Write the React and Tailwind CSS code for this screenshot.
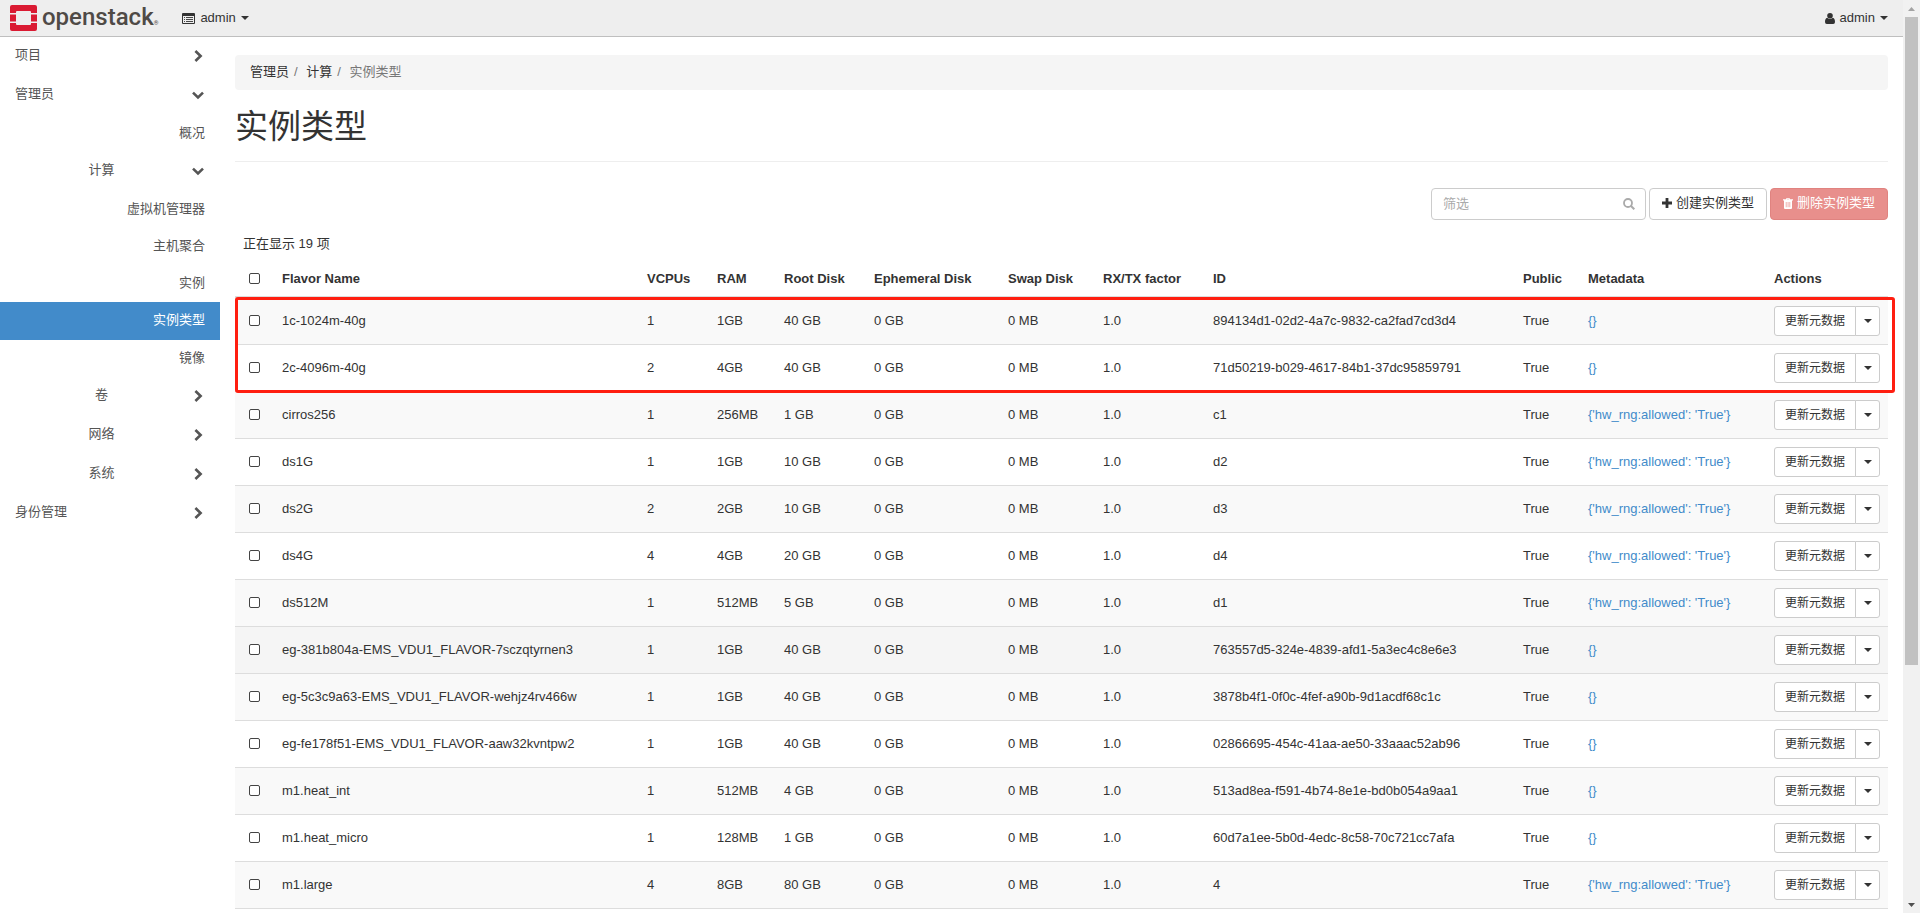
import React from "react";

const uiFont = "font-['Liberation_Sans','Noto_Sans_CJK_SC',sans-serif]";

const rows = [
  ["1c-1024m-40g", "1", "1GB", "40 GB", "894134d1-02d2-4a7c-9832-ca2fad7cd3d4", "{}"],
  ["2c-4096m-40g", "2", "4GB", "40 GB", "71d50219-b029-4617-84b1-37dc95859791", "{}"],
  ["cirros256", "1", "256MB", "1 GB", "c1", "{'hw_rng:allowed': 'True'}"],
  ["ds1G", "1", "1GB", "10 GB", "d2", "{'hw_rng:allowed': 'True'}"],
  ["ds2G", "2", "2GB", "10 GB", "d3", "{'hw_rng:allowed': 'True'}"],
  ["ds4G", "4", "4GB", "20 GB", "d4", "{'hw_rng:allowed': 'True'}"],
  ["ds512M", "1", "512MB", "5 GB", "d1", "{'hw_rng:allowed': 'True'}"],
  ["eg-381b804a-EMS_VDU1_FLAVOR-7sczqtyrnen3", "1", "1GB", "40 GB", "763557d5-324e-4839-afd1-5a3ec4c8e6e3", "{}"],
  ["eg-5c3c9a63-EMS_VDU1_FLAVOR-wehjz4rv466w", "1", "1GB", "40 GB", "3878b4f1-0f0c-4fef-a90b-9d1acdf68c1c", "{}"],
  ["eg-fe178f51-EMS_VDU1_FLAVOR-aaw32kvntpw2", "1", "1GB", "40 GB", "02866695-454c-41aa-ae50-33aaac52ab96", "{}"],
  ["m1.heat_int", "1", "512MB", "4 GB", "513ad8ea-f591-4b74-8e1e-bd0b054a9aa1", "{}"],
  ["m1.heat_micro", "1", "128MB", "1 GB", "60d7a1ee-5b0d-4edc-8c58-70c721cc7afa", "{}"],
  ["m1.large", "4", "8GB", "80 GB", "4", "{'hw_rng:allowed': 'True'}"],
];

const highlightedRow = 7;

const headings = [
  "Flavor Name",
  "VCPUs",
  "RAM",
  "Root Disk",
  "Ephemeral Disk",
  "Swap Disk",
  "RX/TX factor",
  "ID",
  "Public",
  "Metadata",
  "Actions",
];

function Caret() {
  return (
    <svg className="h-1 w-2 shrink-0" viewBox="0 0 8 4" fill="currentColor" aria-hidden="true">
      <path d="M0 0H8L4 4Z" />
    </svg>
  );
}

function Chevron({ open }) {
  return (
    <svg className="h-3 w-3 shrink-0" viewBox="0 0 12 12" fill="none" stroke="currentColor" strokeWidth="2.6" aria-hidden="true">
      {open ? <path d="M1 3.600L6 8.400L11 3.600" /> : <path d="M3.400 1L8.600 6L3.400 11" />}
    </svg>
  );
}

function Logo() {
  return (
    <a href="#home" className="flex items-center gap-[5px] text-[#4f4a46]">
      <svg className="h-[26px] w-[27px]" viewBox="0 0 27 26" aria-hidden="true">
        <g fill="#da1a32">
          <path d="M2 0H25Q27 0 27 2V8H21V7Q21 6 20 6H7Q6 6 6 7V8H0V2Q0 0 2 0Z" />
          <path d="M0 9.600H6V16.400H0ZM21 9.600H27V16.400H21Z" />
          <path d="M0 18H6V19Q6 20 7 20H20Q21 20 21 19V18H27V24Q27 26 25 26H2Q0 26 0 24Z" />
        </g>
      </svg>
      <span className="flex items-end pb-[2px] font-['Roboto','Open_Sans',sans-serif] text-2xl leading-6 font-medium">
        openstack<span className="text-[6px] leading-3 font-normal">®</span>
      </span>
    </a>
  );
}

function Panel({ label, open, nested }) {
  return (
    <button
      type="button"
      aria-expanded={!!open}
      className={
        nested
          ? "flex h-[39px] w-full items-center pr-4 pb-px pl-[11px] text-center"
          : "flex h-[39px] w-full items-center pr-4 pb-px pl-[15px] text-left"
      }
    >
      <span className="flex-1 pb-[2px]">{label}</span>
      <Chevron open={open} />
    </button>
  );
}

function Leaf({ label, active }) {
  return (
    <a
      href="#panel"
      aria-current={active ? "page" : undefined}
      className={
        active
          ? "flex h-[38px] items-center justify-end bg-[#428bca] pr-[15px] pb-[2px] text-white"
          : "flex h-[37px] items-center justify-end pr-[15px] pb-px"
      }
    >
      {label}
    </a>
  );
}

function Check({ label }) {
  return (
    <input
      type="checkbox"
      aria-label={label}
      className="block h-[11px] w-[11px] appearance-none rounded-[2px] border border-[#444] bg-white"
    />
  );
}

export default function App() {
  return (
    <div className={`${uiFont} flex h-screen overflow-hidden bg-white text-[13px] leading-5 text-[#333]`}>
      <div className="flex min-w-0 flex-1 flex-col">
        <header className="flex h-[37px] shrink-0 items-center border-b border-[#bfbfbf] bg-[#eee] pr-[15px] pl-[10px]">
          <Logo />
          <button type="button" className="ml-6 flex items-center gap-[5px]">
            <svg className="h-[11px] w-[13px]" viewBox="0 0 13 11" aria-hidden="true">
              <path fill="currentColor" fillRule="evenodd" d="M1 0H12Q13 0 13 1V10Q13 11 12 11H1Q0 11 0 10V1Q0 0 1 0ZM1 3V10H12V3Z" />
              <path stroke="currentColor" strokeWidth=".9" d="M2 4.500H3M4 4.500H11M2 6.500H3M4 6.500H11M2 8.500H3M4 8.500H11" />
            </svg>
            <span>admin</span>
            <Caret />
          </button>
          <button type="button" className="ml-auto flex items-center gap-[5px]">
            <svg className="h-[11px] w-[10px]" viewBox="0 0 10 11" fill="currentColor" aria-hidden="true">
              <circle cx="5" cy="2.800" r="2.800" />
              <path d="M2.200 4.800C.6 5.200 0 7 0 9Q0 11 1.800 11H8.200Q10 11 10 9C10 7 9.400 5.200 7.800 4.800Q5 7.400 2.200 4.800Z" />
            </svg>
            <span>admin</span>
            <Caret />
          </button>
        </header>

        <div className="flex min-h-0 flex-1">
          <nav className="w-[220px] shrink-0 text-[#555]">
            <Panel label="项目" />
            <Panel label="管理员" open />
            <Leaf label="概况" />
            <Panel label="计算" open nested />
            <Leaf label="虚拟机管理器" />
            <Leaf label="主机聚合" />
            <Leaf label="实例" />
            <Leaf label="实例类型" active />
            <Leaf label="镜像" />
            <Panel label="卷" nested />
            <Panel label="网络" nested />
            <Panel label="系统" nested />
            <Panel label="身份管理" />
          </nav>

          <main className="min-w-0 flex-1 pt-[18px] pr-[15px] pl-[15px]">
            <ol className="flex h-[35px] items-center rounded bg-[#f5f5f5] px-[15px] pb-px">
              <li><a href="#admin">管理员</a></li>
              <li><span className="px-[5px] text-[#777]">/&nbsp;</span><a href="#compute">计算</a></li>
              <li className="text-[#777]"><span className="px-[5px]">/&nbsp;</span>实例类型</li>
            </ol>

            <h1 className="mt-[17px] border-b border-[#eee] pb-[14px] text-[33px] leading-10">实例类型</h1>

            <div className="mt-[26px] flex justify-end gap-[3px]">
              <div className="relative w-[215px]">
                <input
                  type="text"
                  aria-label="筛选"
                  placeholder="筛选"
                  className="h-8 w-full rounded border border-[#ccc] px-[11px] pb-[2px] placeholder:text-[#aaa]"
                />
                <svg className="absolute top-[10px] right-[11px] h-3 w-3 text-[#aaa]" viewBox="0 0 12 12" fill="none" stroke="currentColor" aria-hidden="true">
                  <circle cx="5" cy="5" r="4" strokeWidth="1.800" />
                  <path d="M8 8L11.300 11.300" strokeWidth="2" />
                </svg>
              </div>
              <button type="button" className="flex h-8 items-center gap-1 rounded border border-[#ccc] bg-white px-3 pb-[2px]">
                <svg className="h-[10px] w-[10px]" viewBox="0 0 10 10" fill="currentColor" aria-hidden="true">
                  <path d="M3.600 0H6.400V3.600H10V6.400H6.400V10H3.600V6.400H0V3.600H3.600Z" />
                </svg>
                创建实例类型
              </button>
              <button type="button" className="flex h-8 items-center gap-1 rounded border border-[#e08380] bg-[#e88f8c] px-3 pb-[2px] text-white">
                <svg className="h-[11px] w-[10px]" viewBox="0 0 10 11" fill="currentColor" aria-hidden="true">
                  <path fillRule="evenodd" d="M3 1.300L3.600 0H6.400L7 1.300H10V2.500H9V10Q9 11 8 11H2Q1 11 1 10V2.500H0V1.300ZM2.800 4V9.300H3.500V4ZM4.700 4V9.300H5.400V4ZM6.500 4V9.300H7.200V4ZM4 1.300H6L5.800.8H4.200Z" />
                </svg>
                删除实例类型
              </button>
            </div>

            <div className="relative mt-[10px]">
              <table className="w-full table-fixed border-separate border-spacing-0 text-left">
                <caption className="h-[29px] px-2 pt-1 text-left">正在显示 19 项</caption>
                <colgroup>
                  <col className="w-[39px]" />
                  <col />
                  <col className="w-[70px]" />
                  <col className="w-[67px]" />
                  <col className="w-[90px]" />
                  <col className="w-[134px]" />
                  <col className="w-[95px]" />
                  <col className="w-[110px]" />
                  <col className="w-[310px]" />
                  <col className="w-[65px]" />
                  <col className="w-[186px]" />
                  <col className="w-[122px]" />
                </colgroup>
                <thead>
                  <tr className="h-[39px]">
                    <th className="border-b-2 border-[#ddd] pt-[2px] pl-[14px]"><Check label="全选" /></th>
                    {headings.map((h) => (
                      <th key={h} className="border-b-2 border-[#ddd] px-2 pt-[2px] font-bold whitespace-nowrap">{h}</th>
                    ))}
                  </tr>
                </thead>
                <tbody className="[&_td]:border-b [&_td]:border-[#ddd] [&_td]:px-2 [&_td]:whitespace-nowrap">
                  {rows.map(([name, cpu, ram, disk, id, meta], i) => (
                    <tr
                      key={name}
                      className={i === highlightedRow ? "h-[47px] bg-[#f5f5f5]" : i % 2 ? "h-[47px] bg-white" : "h-[47px] bg-[#f9f9f9]"}
                    >
                      <td><div className="pb-px pl-[6px]"><Check label={name} /></div></td>
                      <td>{name}</td>
                      <td>{cpu}</td>
                      <td>{ram}</td>
                      <td>{disk}</td>
                      <td>0 GB</td>
                      <td>0 MB</td>
                      <td>1.0</td>
                      <td>{id}</td>
                      <td>True</td>
                      <td><a href="#metadata" className="text-[#428bca]">{meta}</a></td>
                      <td>
                        <div className="flex text-xs">
                          <button type="button" className="h-[30px] rounded-l-[3px] border border-[#ccc] bg-white px-[10px]">更新元数据</button>
                          <button type="button" aria-label="更多操作" className="-ml-px flex h-[30px] w-[25px] items-center justify-center rounded-r-[3px] border border-[#ccc] bg-white">
                            <Caret />
                          </button>
                        </div>
                      </td>
                    </tr>
                  ))}
                </tbody>
              </table>
              <div className="pointer-events-none absolute top-[67px] -right-[7px] left-0 h-24 rounded-[3px] border-3 border-[#ff1e10]" />
            </div>
          </main>
        </div>
      </div>

      <div className="flex w-[17px] shrink-0 flex-col items-center bg-[#f1f1f1]" aria-hidden="true">
        <div className="flex h-[17px] items-center text-[#a3a3a3]">
          <svg className="h-1 w-[7px]" viewBox="0 0 7 4" fill="currentColor"><path d="M0 4H7L3.500 0Z" /></svg>
        </div>
        <div className="flex w-full flex-1 flex-col items-center">
          <div className="w-[13px] flex-[14] bg-[#c1c1c1]" />
          <div className="flex-[5]" />
        </div>
        <div className="flex h-[17px] items-center text-[#505050]">
          <svg className="h-1 w-[7px]" viewBox="0 0 7 4" fill="currentColor"><path d="M0 0H7L3.500 4Z" /></svg>
        </div>
      </div>
    </div>
  );
}
